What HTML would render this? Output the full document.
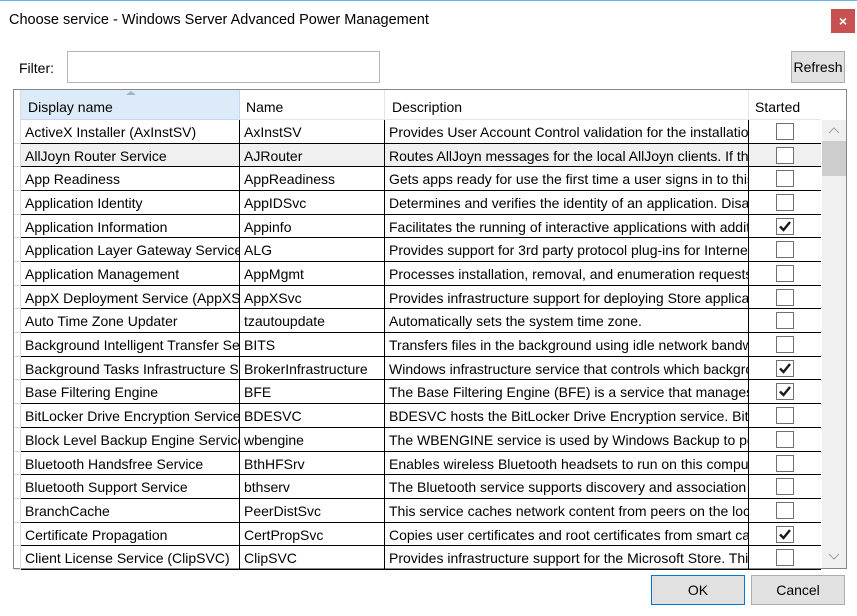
<!DOCTYPE html>
<html><head><meta charset="utf-8"><style>
*{margin:0;padding:0;box-sizing:border-box}
body{width:857px;height:616px;background:#fff;font-family:"Liberation Sans",sans-serif;font-size:14px;color:#000;position:relative;overflow:hidden}
.a{position:absolute}
.row{position:absolute;left:21px;width:800px;height:24px;border-bottom:1px solid #000}
.c{position:absolute;top:0;height:100%;line-height:24px;white-space:nowrap;overflow:hidden;padding-left:4px}
.c1{left:0;width:219px;border-right:1px solid #000}
.c2{left:219px;width:145px;border-right:1px solid #000}
.c3{left:364px;width:364px;border-right:1px solid #000}
.cb{position:absolute;left:755px;top:3px;width:18px;height:17px;border:1px solid #707070;background:#fff}
.rh{position:absolute;left:14px;width:7px;border-bottom:1px solid #dcdcdc;border-right:1px solid #dcdcdc}
.btn{position:absolute;background:#e1e1e1;border:1px solid #adadad;text-align:center}
</style></head><body>
<div class="a" style="left:0;top:0;width:857px;height:1px;background:#6fb5e8"></div>
<div class="a" style="left:9px;top:12px;font-size:14.5px">Choose service - Windows Server Advanced Power Management</div>
<div class="a" style="left:831px;top:9px;width:24px;height:24px;background:#c75050;color:#fff;text-align:center;line-height:24px;font-size:14px;font-weight:bold">×</div>
<div class="a" style="left:19px;top:60px">Filter:</div>
<div class="a" style="left:67px;top:51px;width:313px;height:32px;border:1px solid #b4b4b4"></div>
<div class="btn" style="left:791px;top:51px;width:54px;height:32px;line-height:31px">Refresh</div>
<div class="a" style="left:13px;top:89px;width:834px;height:480px;border:1px solid #828790"></div>
<div class="a" style="left:14px;top:90px;width:807px;height:30px;background:#fff;border-bottom:1px solid #e5e5e5"></div>
<div class="a" style="left:21px;top:90px;width:219px;height:30px;background:#dcebf7;border-right:1px solid #bcdcf4;border-bottom:1px solid #bcdcf4"></div>
<div class="a" style="left:126px;top:91px;width:0;height:0;border-left:5px solid transparent;border-right:5px solid transparent;border-bottom:4px solid #9eb5c9"></div>
<div class="a" style="left:28px;top:99px">Display name</div>
<div class="a" style="left:240px;top:90px;width:145px;height:30px;border-right:1px solid #e5e5e5"></div>
<div class="a" style="left:246px;top:99px">Name</div>
<div class="a" style="left:385px;top:90px;width:364px;height:30px;border-right:1px solid #e5e5e5"></div>
<div class="a" style="left:392px;top:99px">Description</div>
<div class="a" style="left:755px;top:99px">Started</div>
<div class="a" style="left:14px;top:90px;width:7px;height:478px;background:#fff;border-right:1px solid #dcdcdc"></div>
<div class="a" style="left:822px;top:120px;width:24px;height:448px;background:#f0f0f0"></div>
<div class="a" style="left:822px;top:141px;width:24px;height:35px;background:#cdcdcd"></div>
<svg class="a" style="left:828px;top:127px" width="12" height="8"><path d="M1 6 L6 1 L11 6" stroke="#a0a0a0" fill="none"/></svg>
<svg class="a" style="left:828px;top:553px" width="12" height="8"><path d="M1 1 L6 6 L11 1" stroke="#a0a0a0" fill="none"/></svg>
<div id="rows"></div>
<div class="btn" style="left:651px;top:575px;width:94px;height:30px;line-height:28px;border-color:#0078d7">OK</div>
<div class="btn" style="left:751px;top:575px;width:94px;height:30px;line-height:28px">Cancel</div>
<script>
var d=[["ActiveX Installer (AxInstSV)","AxInstSV","Provides User Account Control validation for the installation of ActiveX",0],
["AllJoyn Router Service","AJRouter","Routes AllJoyn messages for the local AllJoyn clients. If this",0],
["App Readiness","AppReadiness","Gets apps ready for use the first time a user signs in to this",0],
["Application Identity","AppIDSvc","Determines and verifies the identity of an application. Disabling",0],
["Application Information","Appinfo","Facilitates the running of interactive applications with additional",1],
["Application Layer Gateway Service","ALG","Provides support for 3rd party protocol plug-ins for Internet",0],
["Application Management","AppMgmt","Processes installation, removal, and enumeration requests for",0],
["AppX Deployment Service (AppXSVC)","AppXSvc","Provides infrastructure support for deploying Store applications",0],
["Auto Time Zone Updater","tzautoupdate","Automatically sets the system time zone.",0],
["Background Intelligent Transfer Service","BITS","Transfers files in the background using idle network bandwidth",0],
["Background Tasks Infrastructure Service","BrokerInfrastructure","Windows infrastructure service that controls which background",1],
["Base Filtering Engine","BFE","The Base Filtering Engine (BFE) is a service that manages firewall",1],
["BitLocker Drive Encryption Service","BDESVC","BDESVC hosts the BitLocker Drive Encryption service. BitLocker",0],
["Block Level Backup Engine Service","wbengine","The WBENGINE service is used by Windows Backup to perform",0],
["Bluetooth Handsfree Service","BthHFSrv","Enables wireless Bluetooth headsets to run on this computer",0],
["Bluetooth Support Service","bthserv","The Bluetooth service supports discovery and association of",0],
["BranchCache","PeerDistSvc","This service caches network content from peers on the local",0],
["Certificate Propagation","CertPropSvc","Copies user certificates and root certificates from smart cards",1],
["Client License Service (ClipSVC)","ClipSVC","Provides infrastructure support for the Microsoft Store. This",0]];
var h="";
for(var i=0;i<d.length;i++){var t=Math.round(120+i*23.68),b=Math.round(120+(i+1)*23.68),hh=b-t;
var bg=i==1?"background:#f0f0f0;":"";
h+='<div class="rh" style="top:'+t+'px;height:'+hh+'px"></div>';
h+='<div class="row" style="top:'+t+'px;height:'+hh+'px;'+bg+'"><div class="c c1">'+d[i][0]+'</div><div class="c c2">'+d[i][1]+'</div><div class="c c3">'+d[i][2]+'</div><div class="cb">'+(d[i][3]?'<svg width="16" height="15" viewBox="0 0 16 15"><path d="M3 7.5 L6.5 11 L13 3" stroke="#1a1a1a" stroke-width="2.4" fill="none"/></svg>':'')+'</div></div>';}
document.getElementById("rows").innerHTML=h;
</script>
</body></html>
